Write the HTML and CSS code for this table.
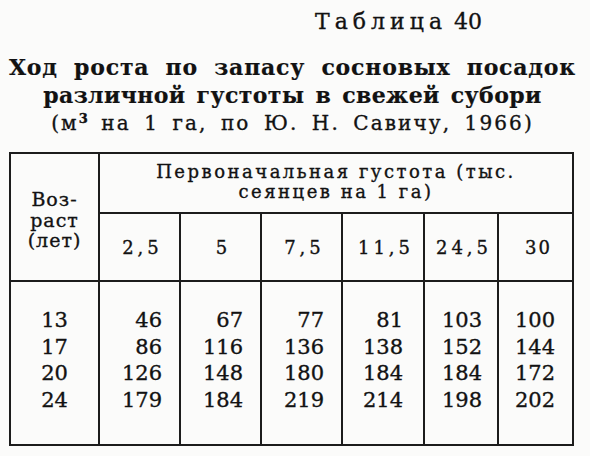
FILE: index.html
```html
<!DOCTYPE html>
<html lang="ru">
<head>
<meta charset="utf-8">
<title>Таблица 40</title>
<link rel="stylesheet" href="styles.css">
</head>
<body>
<div class="page">
  <div class="table-no"><span class="spaced">Таблица</span> 40</div>
  <div class="title">
    <div class="t1">Ход роста по запасу сосновых посадок</div>
    <div class="t2">различной густоты в свежей субори</div>
    <div class="t3">(м<sup>3</sup> на 1 га, по Ю. Н. Савичу, 1966)</div>
  </div>
  <div class="grid">
    <div class="age-head">Воз-<br>раст<br>(лет)</div>
    <div class="dens-head">Первоначальная густота (тыс.<br>сеянцев на 1 га)</div>
    <div class="sub">2,5</div>
    <div class="sub">5</div>
    <div class="sub">7,5</div>
    <div class="sub">11,5</div>
    <div class="sub">24,5</div>
    <div class="sub last">30</div>
    <div class="data age">13<br>17<br>20<br>24</div>
    <div class="data">46<br>86<br>126<br>179</div>
    <div class="data">67<br>116<br>148<br>184</div>
    <div class="data">77<br>136<br>180<br>219</div>
    <div class="data c5">81<br>138<br>184<br>214</div>
    <div class="data c6">103<br>152<br>184<br>198</div>
    <div class="data last">100<br>144<br>172<br>202</div>
  </div>
</div>
</body>
</html>
```
FILE: styles.css
```css
html, body {
  margin: 0;
  padding: 0;
  background: #fbfbfa;
}
.page {
  width: 590px;
  height: 456px;
  padding-top: 10px;
  box-sizing: border-box;
  font-family: "DejaVu Serif", "Liberation Serif", serif;
  color: #121212;
  -webkit-text-stroke: 0.35px #121212;
}
.table-no {
  font-size: 22px;
  line-height: 24px;
  text-align: right;
  padding-right: 108px;
}
.spaced {
  letter-spacing: 5px;
}
.title {
  margin-top: 19px;
  padding: 0 14px 0 9px;
  text-align: center;
}
.t1, .t2 {
  font-weight: bold;
  font-size: 22px;
  line-height: 28px;
  -webkit-text-stroke: 0.2px #121212;
}
.t1 {
  letter-spacing: 0.8px;
  text-align: justify;
  text-align-last: justify;
}
.t2 {
  letter-spacing: 0.4px;
  word-spacing: 3px;
}
.t3 {
  font-size: 20px;
  line-height: 28px;
  letter-spacing: 2.1px;
  word-spacing: 5px;
}
.t3 sup {
  font-size: 13px;
  line-height: 0;
  vertical-align: 7px;
  letter-spacing: 0;
  font-weight: bold;
}
.grid {
  margin: 15px 0 0 9px;
  width: 565px;
  height: 294px;
  box-sizing: border-box;
  border: 2px solid #1c1c1c;
  display: grid;
  grid-template-columns: 89px 81px 81px 81px 82px 74px 73px;
  grid-template-rows: 60px 68px 162px;
}
.age-head {
  grid-row: 1 / 3;
  grid-column: 1;
  border-right: 2px solid #1c1c1c;
  border-bottom: 2px solid #1c1c1c;
  font-size: 19px;
  line-height: 20.5px;
  letter-spacing: 1px;
  text-align: center;
  padding-top: 35px;
}
.dens-head {
  grid-column: 2 / 8;
  border-bottom: 2px solid #1c1c1c;
  font-size: 18px;
  line-height: 20px;
  letter-spacing: 2.5px;
  text-align: center;
  padding-top: 8px;
}
.sub {
  border-right: 2px solid #1c1c1c;
  border-bottom: 2px solid #1c1c1c;
  font-size: 18px;
  letter-spacing: 4px;
  display: flex;
  align-items: center;
  justify-content: center;
  padding-left: 6px;
}
.sub.last {
  letter-spacing: 2px;
}
.data {
  border-right: 2px solid #1c1c1c;
  font-size: 21px;
  line-height: 26.7px;
  text-align: right;
  padding: 25px 17px 0 0;
}
.data.age {
  text-align: center;
  padding-right: 0;
}
.data.c5 {
  padding-right: 20px;
}
.data.c6 {
  padding-right: 15px;
}
.last {
  border-right: none;
}
```
